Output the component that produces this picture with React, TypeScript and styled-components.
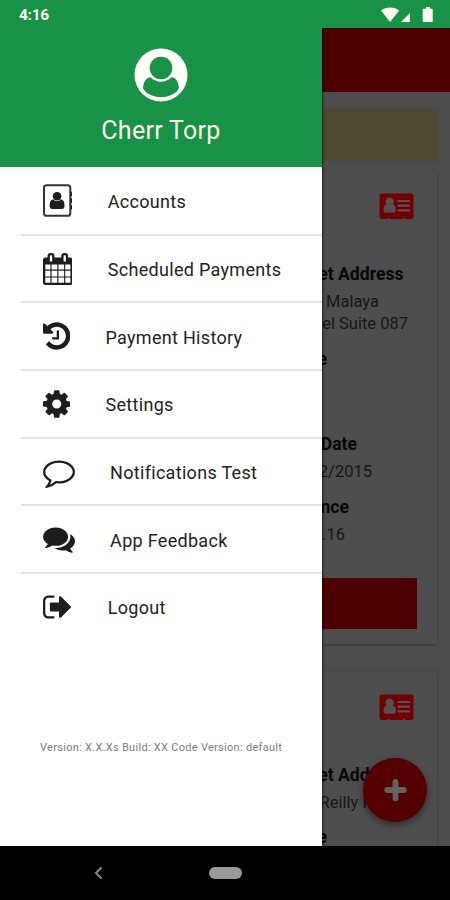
import React from "react";
import styled, { createGlobalStyle } from "styled-components";

const GlobalStyle = createGlobalStyle`
  * { box-sizing: border-box; }
  body { margin: 0; background: #000; font-family: Roboto, "Liberation Sans", sans-serif; }
  svg { display: block; }
`;

const Phone = styled.div`
  width: 450px;
  height: 900px;
  display: grid;
  grid-template-rows: 28px 818px 54px;
  overflow: hidden;
  background: #000;
`;

const StatusBar = styled.header`
  display: flex;
  justify-content: space-between;
  align-items: center;
  background: #179247;
  color: #fffdf0;
  padding: 1px 16px 0 19px;
`;

const Clock = styled.span`
  font-size: 15.5px;
  font-weight: 700;
  letter-spacing: -0.3px;
`;

const Stage = styled.main`
  display: grid;
  grid-template: 100% / 322px 1fr;
  overflow: hidden;
`;

const Drawer = styled.nav`
  grid-area: 1 / 1;
  z-index: 2;
  display: flex;
  flex-direction: column;
  background: #fff;
  box-shadow: 1px 0 2px rgba(0, 0, 0, 0.6);
`;

const Profile = styled.div`
  height: 139px;
  display: flex;
  flex-direction: column;
  align-items: center;
  background: #179247;
  color: #fdfbe6;
  padding-top: 20px;
`;

const UserName = styled.div`
  margin-top: 14px;
  font-size: 25px;
  line-height: 30px;
  letter-spacing: 0.3px;
`;

const MenuList = styled.ul`
  list-style: none;
  margin: 1px 0 0 21px;
  padding: 0;
`;

const MenuRow = styled.li`
  height: 67.7px;
  display: flex;
  align-items: center;
  gap: 35.5px;
  padding-left: 21.6px;
  border-bottom: 2px solid #e2e2e2;
  color: #222;

  &:last-child { border-bottom-color: transparent; }
`;

const MenuLabel = styled.span`
  font-size: 18px;
  letter-spacing: 0.3px;
  padding-top: 2px;
`;

const Version = styled.div`
  margin: 99px 0 0 40px;
  font-size: 11px;
  line-height: 14px;
  letter-spacing: 0.29px;
  color: #7c7c7c;
  white-space: nowrap;
`;

const Page = styled.section`
  grid-area: 1 / 1 / 2 / 3;
  position: relative;
  overflow: hidden;
  background: #4d4d4d;
`;

const AppBar = styled.div`
  height: 64px;
  background: #4d0000;
`;

const Notice = styled.div`
  height: 51px;
  margin: 17px 12px 11px;
  background: #4b4930;
  box-shadow: 0 0 2px #3f3f3a;
`;

const Card = styled.article`
  height: 473px;
  margin: 0 13px 28px 12px;
  padding: 22px 20px 15px 250px;
  display: flex;
  flex-direction: column;
  background: #4d4d4d;
  box-shadow: 0 1px 3px #383838;
`;

const CardIcon = styled.div`
  display: flex;
  justify-content: flex-end;
  padding-right: 3px;
  margin-bottom: 42px;
`;

const Label = styled.div<{ $right: number; $gap?: number }>`
  margin-top: ${(p) => p.$gap ?? 0}px;
  padding-right: ${(p) => p.$right}px;
  text-align: right;
  font-size: 17.6px;
  line-height: 24px;
  font-weight: 700;
  white-space: nowrap;
  color: #060606;
`;

const Value = styled(Label)`
  font-size: 16.5px;
  line-height: 22px;
  font-weight: 400;
  color: #161616;
`;

const PayButton = styled.div`
  height: 51px;
  margin: auto 0 0 -230px;
  background: #4d0000;
`;

const Fab = styled.button`
  position: absolute;
  right: 23px;
  bottom: 24px;
  width: 64px;
  height: 64px;
  border: 0;
  border-radius: 50%;
  padding: 0;
  display: grid;
  place-items: center;
  background: #550000;
  box-shadow: 0 3px 7px rgba(0, 0, 0, 0.45);
`;

const NavBar = styled.footer`
  display: flex;
  align-items: center;
  gap: 106px;
  padding-left: 94px;
  background: #000;
`;

const HomePill = styled.div`
  width: 33px;
  height: 12px;
  border-radius: 6px;
  background: #999;
`;

const Glyph = ({ x, w, d }: { x: number; w: number; d: string }) => (
  <svg width={w / 56} height="32" viewBox={`${x} 0 ${w} 1792`} fill="#1d1d1d">
    <path d={d} />
  </svg>
);

const AddressBook = () => (
  <svg width="29.7" height="34" viewBox="0 0 29.7 34">
    <rect x="1" y="1.2" width="26.3" height="30.6" rx="2.6" fill="none" stroke="#333" strokeWidth="2" />
    <path d="M28 8.2h1.7v3.6H28zM28 14.8h1.7v3.6H28zM28 21.4h1.7V25H28z" fill="#1d1d1d" stroke="#1d1d1d" strokeWidth=".8" />
    <circle cx="14.1" cy="12.3" r="4.3" fill="#1d1d1d" />
    <path d="M10.2 15.3c-2.400.4-3.600 3-3.600 6.600 0 2 1.200 3 2.700 3h9.600c1.600 0 2.700-1 2.700-3 0-3.600-1.200-6.200-3.600-6.600-1 1.200-2.400 1.900-3.900 1.900s-2.900-.7-3.900-1.900z" fill="#1d1d1d" />
  </svg>
);

const CALENDAR =
  "M192 1664h288v-288h-288v288zm352 0h320v-288h-320v288zm-352-352h288v-320h-288v320zm352 0h320v-320h-320v320zm-352-384h288v-288h-288v288zm736 736h320v-288h-320v288zm-384-736h320v-288h-320v288zm768 736h288v-288h-288v288zm-384-352h320v-320h-320v320zm-352-864v-288q0-13-9.500-22.500t-22.500-9.500h-64q-13 0-22.500 9.500t-9.500 22.500v288q0 13 9.500 22.500t22.500 9.500h64q13 0 22.500-9.500t9.500-22.500zm736 864h288v-320h-288v320zm-384-384h320v-288h-320v288zm384 0h288v-288h-288v288zm32-480v-288q0-13-9.500-22.500t-22.500-9.500h-64q-13 0-22.500 9.500t-9.500 22.500v288q0 13 9.500 22.500t22.500 9.500h64q13 0 22.500-9.500t9.500-22.500zm384-64v1280q0 52-38 90t-90 38h-1408q-52 0-90-38t-38-90v-1280q0-52 38-90t90-38h128v-96q0-66 47-113t113-47h64q66 0 113 47t47 113v96h384v-96q0-66 47-113t113-47h64q66 0 113 47t47 113v96h128q52 0 90 38t38 90z";
const HISTORY =
  "M1664 896q0 156-61 298t-164 245-245 164-298 61q-172 0-327-72.500t-264-204.500q-7-10-6.500-22.500t8.500-20.500l137-138q10-9 25-9 16 2 23 12 73 95 179 147t225 52q104 0 198.500-40.500t163.500-109.500 109.500-163.500 40.500-198.500-40.500-198.500-109.500-163.500-163.500-109.500-198.500-40.500q-98 0-188 35.500t-160 101.500l137 138q31 30 14 69-17 40-59 40h-448q-26 0-45-19t-19-45v-448q0-42 40-59 39-17 69 14l130 129q107-101 244.500-156.500t284.500-55.500q156 0 298 61t245 164 164 245 61 298zm-640-288v448q0 14-9 23t-23 9h-320q-14 0-23-9t-9-23v-64q0-14 9-23t23-9h224v-352q0-14 9-23t23-9h64q14 0 23 9t9 23z";
const COG =
  "M1152 896q0-106-75-181t-181-75-181 75-75 181 75 181 181 75 181-75 75-181zm512-109v222q0 12-8 23t-20 13l-185 28q-19 54-39 91 35 50 107 138 10 12 10 25t-9 23q-27 37-99 108t-94 71q-12 0-26-9l-138-108q-44 23-91 38-16 136-29 186-7 28-36 28h-222q-14 0-24.500-8.500t-11.500-21.500l-28-184q-49-16-90-37l-141 107q-10 9-25 9-14 0-25-11-126-114-165-168-7-10-7-23 0-12 8-23 15-21 51-66.500t54-70.500q-27-50-41-99l-183-27q-13-2-21-12.500t-8-23.500v-222q0-12 8-23t19-13l186-28q14-46 39-92-40-57-107-138-10-12-10-24 0-10 9-23 26-36 98.500-107.500t94.500-71.500q13 0 26 10l138 107q44-23 91-38 16-136 29-186 7-28 36-28h222q14 0 24.500 8.500t11.500 21.500l28 184q49 16 90 37l142-107q9-9 24-9 13 0 25 10 129 119 165 170 7 8 7 22 0 12-8 23-15 21-51 66.500t-54 70.500q26 50 41 98l183 28q13 2 21 12.500t8 23.500z";
const COMMENT =
  "M896 384q-204 0-381.500 69.500t-282 187.500-104.500 255q0 112 71.500 213.500t201.500 175.500l87 50-27 96q-24 91-70 172 152-63 275-171l43-38 57 6q69 8 130 8 204 0 381.500-69.500t282-187.500 104.500-255-104.500-255-282-187.500-381.500-69.500zm896 512q0 174-120 321.500t-326 233-450 85.500q-70 0-145-8-198 175-460 242-49 14-114 22h-5q-15 0-27-10.500t-16-27.500v-1q-3-4-.5-12t2-10 4.500-9.500l6-9 7-8.500 8-9q7-8 31-34.500t34.500-38 31-39.500 32.500-51 27-59 26-76q-157-89-247.500-220t-90.500-281q0-174 120-321.500t326-233 450-85.500 450 85.500 326 233 120 321.500z";
const COMMENTS =
  "M1408 768q0 139-94 257t-256.500 186.500-353.500 68.500q-86 0-176-16-124 88-278 128-36 9-86 16h-3q-11 0-20.500-8t-11.500-21q-1-3-1-6.500t.5-6.500 2-6l2.500-5 3.500-5.500 4-5 4.500-5 4-4.500q5-6 23-25t26-29.500 22.500-29 25-38.500 20.500-44q-124-72-195-177t-71-224q0-139 94-257t256.500-186.500 353.500-68.500 353.500 68.500 256.500 186.500 94 257zm384 256q0 120-71 224.500t-195 176.500q10 24 20.500 44t25 38.500 22.500 29 26 29.500 23 25q1 1 4 4.500t4.500 5 4 5 3.500 5.500l2.500 5 2 6 .5 6.500-1 6.500q-3 14-13 22t-22 7q-50-7-86-16-154-40-278-128-90 16-176 16-271 0-472-132 58 4 88 4 161 0 309-45t264-129q125-92 192-212t67-254q0-77-23-152 129 71 204 178t75 230z";
const SIGN_OUT =
  "M704 1440q0 4 1 20t.5 26.500-3 23.500-10 19.500-20.500 6.500h-320q-119 0-203.500-84.500t-84.500-203.500v-704q0-119 84.500-203.500t203.500-84.500h320q13 0 22.500 9.500t9.500 22.500q0 4 1 20t.5 26.500-3 23.500-10 19.500-20.500 6.500h-320q-66 0-113 47t-47 113v704q0 66 47 113t113 47h312l11.500 1 11.500 3 8 5.500 7 9 2 13.500zm928-544q0 26-19 45l-544 544q-19 19-45 19t-45-19-19-45v-288h-448q-26 0-45-19t-19-45v-384q0-26 19-45t45-19h448v-288q0-26 19-45t45-19 45 19l544 544q19 19 19 45z";

const items = [
  { label: "Accounts", icon: <AddressBook /> },
  { label: "Scheduled Payments", icon: <Glyph x={64} w={1664} d={CALENDAR} /> },
  { label: "Payment History", icon: <Glyph x={128} w={1536} d={HISTORY} /> },
  { label: "Settings", icon: <Glyph x={128} w={1536} d={COG} /> },
  { label: "Notifications Test", icon: <Glyph x={0} w={1792} d={COMMENT} /> },
  { label: "App Feedback", icon: <Glyph x={0} w={1792} d={COMMENTS} /> },
  { label: "Logout", icon: <Glyph x={64} w={1664} d={SIGN_OUT} /> },
];

const Avatar = () => (
  <svg width="54" height="54" viewBox="0 0 54 54">
    <circle cx="27" cy="27" r="26.500" fill="#fffef8" />
    <circle cx="27" cy="20" r="11.300" fill="#179247" />
    <path d="M16.500 29.300c-4 0-6.500 4-7.300 9.100-.2 1.400 0 2.600.8 3.500C14 46.700 20.200 49 27 49s13-2.300 17-7.100c.8-.9 1-2.100.8-3.500-.8-5.100-3.300-9.100-7.300-9.100-2.800 2.900-6.500 4.500-10.500 4.500s-7.700-1.600-10.500-4.500z" fill="#179247" />
  </svg>
);

const IdCard = () => (
  <svg width="35" height="27" viewBox="0 0 35 27">
    <path d="M3 .5h29a2.500 2.500 0 0 1 2.500 2.500v20.500a2.500 2.500 0 0 1-2.500 2.500h-5.500l-1.500-1.800-1.500 1.800h-12.500l-1.500-1.800L8.500 26H3a2.500 2.500 0 0 1-2.500-2.500V3A2.500 2.500 0 0 1 3 .5z" fill="#6e0004" />
    <circle cx="10.700" cy="8.800" r="4.200" fill="#555050" />
    <path d="M7.400 11.500c-2 .5-2.900 3-2.900 5.700 0 1.500 1 2.600 2.400 2.600h7.600c1.400 0 2.400-1.100 2.400-2.600 0-2.700-.9-5.200-2.900-5.700z" fill="#555050" />
    <path d="M19.500 8h10.500M19.500 12.700h10.500M19.500 17.400h10.500" stroke="#625052" strokeWidth="2.200" strokeLinecap="round" />
  </svg>
);

export default function App() {
  return (
    <>
      <GlobalStyle />
      <Phone>
        <StatusBar>
          <Clock>4:16</Clock>
          <svg width="53" height="18" viewBox="0 0 53 18" fill="#fffff5">
            <path d="M0 4.500C5 .4 13.200.4 18.200 4.500L9.100 16z" />
            <path d="M29 7v9h-9z" />
            <path d="M45.200 1h3.800v1.700h1.700c.6 0 1 .4 1 1V15c0 .6-.4 1-1 1h-8c-.6 0-1-.4-1-1V3.700c0-.6.4-1 1-1h2.500z" />
          </svg>
        </StatusBar>
        <Stage>
          <Page>
            <AppBar />
            <Notice />
            <Card>
              <CardIcon><IdCard /></CardIcon>
              <Label $right={13.5}>Street Address</Label>
              <Value $right={38} $gap={5}>4512 Malaya</Value>
              <Value $right={9}>Laurel Suite 087</Value>
              <Label $right={90} $gap={12}>State</Label>
              <Label $right={60} $gap={61}>Due Date</Label>
              <Value $right={45} $gap={5}>02/02/2015</Value>
              <Label $right={68} $gap={12}>Balance</Label>
              <Value $right={72} $gap={5}>$120.16</Value>
              <PayButton />
            </Card>
            <Card>
              <CardIcon><IdCard /></CardIcon>
              <Label $right={13.5}>Street Address</Label>
              <Value $right={14} $gap={5}>Reilly Plaza</Value>
              <Label $right={90} $gap={11}>State</Label>
            </Card>
            <Fab aria-label="Add">
              <svg width="24" height="24" viewBox="0 0 24 24">
                <path d="M12.500 3.800v16.400M4.300 12h16.400" stroke="#646060" strokeWidth="5.800" strokeLinecap="round" />
              </svg>
            </Fab>
          </Page>
          <Drawer>
            <Profile>
              <Avatar />
              <UserName>Cherr Torp</UserName>
            </Profile>
            <MenuList>
              {items.map((item) => (
                <MenuRow key={item.label}>
                  {item.icon}
                  <MenuLabel>{item.label}</MenuLabel>
                </MenuRow>
              ))}
            </MenuList>
            <Version>Version: X.X.Xs Build: XX Code Version: default</Version>
          </Drawer>
        </Stage>
        <NavBar>
          <svg width="9" height="14" viewBox="0 0 9 14">
            <path d="M7.500 1.500L2 7l5.500 5.500" fill="none" stroke="#8a8a8a" strokeWidth="2" />
          </svg>
          <HomePill />
        </NavBar>
      </Phone>
    </>
  );
}
